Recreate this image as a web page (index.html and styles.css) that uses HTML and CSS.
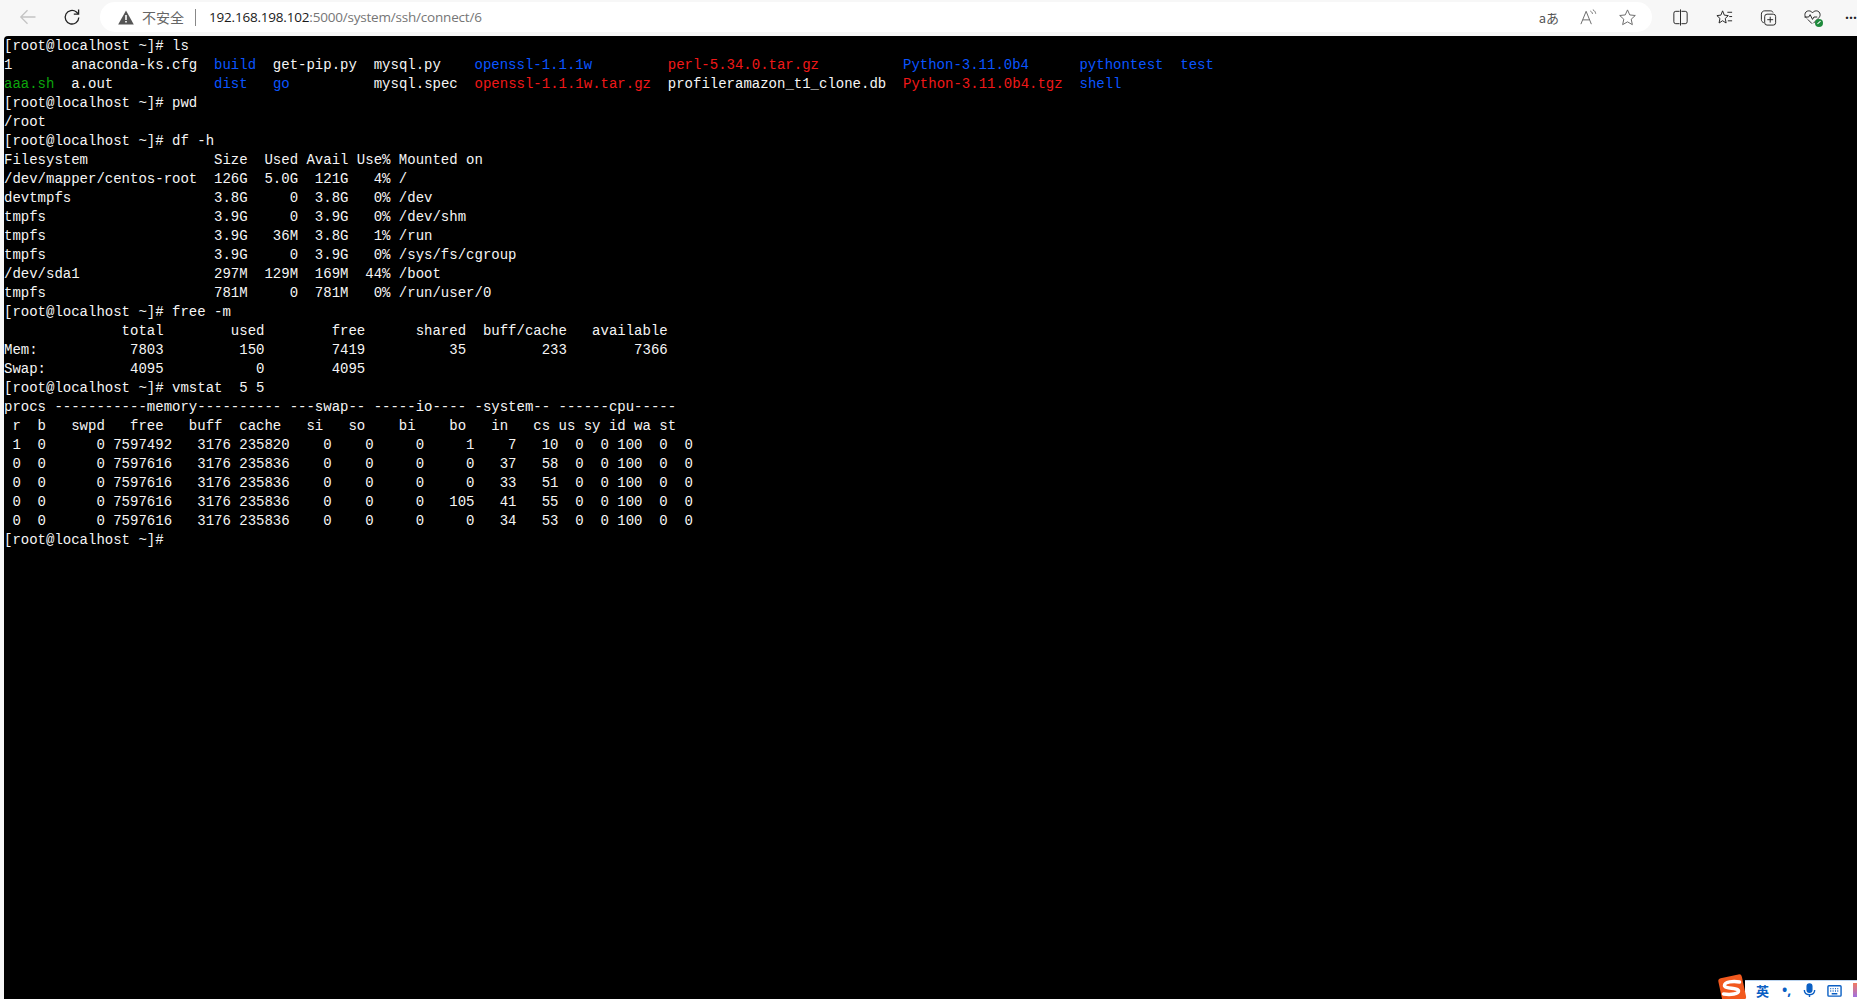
FILE: index.html
```html
<!DOCTYPE html>
<html lang="zh">
<head>
<meta charset="utf-8">
<title>SSH</title>
<link rel="stylesheet" href="styles.css">
</head>
<body>
<header class="toolbar">
  <div class="nav">
    <svg class="nav-icon back" viewBox="0 0 20 20"><path d="M17.5 10H2.800M9.500 3.200 2.800 10l6.700 6.800"/></svg>
    <svg class="nav-icon reload" viewBox="0 0 20 20"><path d="M16.800 10.500A6.800 6.800 0 1 1 14.400 5L16.400 7"/><path d="M16.600 2.400V7.200H11.800"/></svg>
  </div>
  <div class="omnibox">
    <svg class="warn" viewBox="0 0 16 15"><path d="M8 .5 15.800 14.500H.2Z"/><path class="warn-mark" d="M7.200 5h1.600v5H7.200ZM7.200 11h1.600v1.600H7.200Z"/></svg>
    <span class="insecure">不安全</span>
    <span class="divider"></span>
    <span class="url"><span class="host">192.168.198.102</span>:5000/system/ssh/connect/6</span>
    <span class="omni-actions">
      <span class="translate">aあ</span>
      <svg class="ti" viewBox="0 0 20 20"><path d="M2 17 7.500 3.500 13 17M4 12.500h7"/><path d="M12 3.200c1.400.8 2 1.800 2.200 3M14.600 1.800c1.800 1 2.700 2.500 3 4.200"/></svg>
      <svg class="ti star" viewBox="0 0 20 20"><path d="M10 2l2.400 5.300 5.800.6-4.300 3.900 1.200 5.700L10 14.600l-5.100 2.900 1.200-5.700-4.300-3.900 5.800-.6Z"/></svg>
    </span>
  </div>
  <div class="tools">
    <svg class="ti dark" viewBox="0 0 20 20"><path d="M9 3.500H5A2 2 0 0 0 3 5.500v9a2 2 0 0 0 2 2h4M11 3.500h4a2 2 0 0 1 2 2v9a2 2 0 0 1-2 2h-4M10 1.500v17"/></svg>
    <svg class="ti dark" viewBox="0 0 20 20"><path d="M8 3 9.800 7.500 14 8l-3.200 3 .9 4.800L8 13.400l-3.700 2.400.9-4.800L2 8l4.200-.5ZM13 4.500h5M15 9h3M13.500 13.500H18"/></svg>
    <svg class="ti dark" viewBox="0 0 20 20"><path d="M5 15.500C3.500 15 2.500 13.800 2.500 12V6.500c0-2 1.500-3.500 3.500-3.500h6c1.300 0 2.300.6 2.800 1.700"/><rect x="6" y="6.500" width="11.500" height="11.500" rx="2.500"/><path d="M11.800 9.200v6.200M8.700 12.300h6.200"/></svg>
    <span class="health">
      <svg class="ti dark" viewBox="0 0 20 20"><path d="M4 11C2.500 9.500 2 8.500 2 7c0-2.500 2-4 4-4 1.700 0 3 .8 4 2 1-1.200 2.300-2 4-2 2 0 4 1.500 4 4 0 1.500-.5 2.500-2 4l-5 5"/><path d="M1.500 9.500h4.500l1.500-2.500 2.500 5 1.500-2.500H15"/><path d="M5 12l4.500 4.500"/></svg>
      <span class="health-dot"></span>
    </span>
    <span class="more">···</span>
  </div>
</header>
<main class="terminal">
<pre class="screen">[root@localhost ~]# ls
1       anaconda-ks.cfg  <b class="dir">build</b>  get-pip.py  mysql.py    <b class="dir">openssl-1.1.1w</b>         <b class="arc">perl-5.34.0.tar.gz</b>          <b class="dir">Python-3.11.0b4</b>      <b class="dir">pythontest</b>  <b class="dir">test</b>
<b class="exe">aaa.sh</b>  a.out            <b class="dir">dist</b>   <b class="dir">go</b>          mysql.spec  <b class="arc">openssl-1.1.1w.tar.gz</b>  profileramazon_t1_clone.db  <b class="arc">Python-3.11.0b4.tgz</b>  <b class="dir">shell</b>
[root@localhost ~]# pwd
/root
[root@localhost ~]# df -h
Filesystem               Size  Used Avail Use% Mounted on
/dev/mapper/centos-root  126G  5.0G  121G   4% /
devtmpfs                 3.8G     0  3.8G   0% /dev
tmpfs                    3.9G     0  3.9G   0% /dev/shm
tmpfs                    3.9G   36M  3.8G   1% /run
tmpfs                    3.9G     0  3.9G   0% /sys/fs/cgroup
/dev/sda1                297M  129M  169M  44% /boot
tmpfs                    781M     0  781M   0% /run/user/0
[root@localhost ~]# free -m
              total        used        free      shared  buff/cache   available
Mem:           7803         150        7419          35         233        7366
Swap:          4095           0        4095
[root@localhost ~]# vmstat  5 5
procs -----------memory---------- ---swap-- -----io---- -system-- ------cpu-----
 r  b   swpd   free   buff  cache   si   so    bi    bo   in   cs us sy id wa st
 1  0      0 7597492   3176 235820    0    0     0     1    7   10  0  0 100  0  0
 0  0      0 7597616   3176 235836    0    0     0     0   37   58  0  0 100  0  0
 0  0      0 7597616   3176 235836    0    0     0     0   33   51  0  0 100  0  0
 0  0      0 7597616   3176 235836    0    0     0   105   41   55  0  0 100  0  0
 0  0      0 7597616   3176 235836    0    0     0     0   34   53  0  0 100  0  0
[root@localhost ~]#</pre>
</main>
<aside class="ime">
  <svg class="ime-logo" viewBox="0 0 28 26"><rect x="2" y="2" width="24" height="26" rx="3" transform="rotate(-12 14 14)" class="logo-bg"/><path class="logo-s" d="M21.500 8C15 6.500 6.500 8 6.500 11.500c0 3.500 14 2 14 5.500 0 3-7.500 4-15 3"/></svg>
  <span class="ime-bar">
    <span class="ime-lang">英</span>
    <span class="ime-punct">•,</span>
    <svg class="ime-icon" viewBox="0 0 16 16"><rect x="5.500" y="1" width="5" height="9" rx="2.500" class="fill"/><path d="M2.500 7.500c0 3.300 2.300 5 5.500 5s5.500-1.700 5.500-5M8 12.500V15"/></svg>
    <svg class="ime-icon ime-keys" viewBox="0 0 16 16"><rect x="1" y="3" width="14" height="11" rx="1"/><path d="M3.500 6h1M6 6h1M8.500 6h1M11 6h1M3.500 8.500h1M6 8.500h1M8.500 8.500h1M11 8.500h1M5 11.500h6"/></svg>
    <span class="ime-skin"></span>
  </span>
</aside>
</body>
</html>
```
FILE: styles.css
```css
* { box-sizing: border-box; }
html, body { height: 100%; }
body {
  margin: 0;
  display: flex;
  flex-direction: column;
  height: 999px;
  overflow: hidden;
  background: #f7f7f7;
  font-family: "Open Sans", "Noto Sans CJK SC", sans-serif;
}
.toolbar {
  display: flex;
  align-items: center;
  height: 36px;
  padding-bottom: 2px;
  flex: none;
  background: #f7f7f7;
}
.nav {
  display: flex;
  align-items: center;
  width: 100px;
  flex: none;
  padding-left: 18px;
  gap: 24px;
}
.nav-icon {
  width: 20px;
  height: 20px;
  fill: none;
  stroke: #222;
  stroke-width: 1.300;
}
.nav-icon.back { stroke: #c4c4c4; }
.omnibox {
  display: flex;
  align-items: center;
  flex: 1 1 auto;
  height: 30px;
  padding-left: 18px;
  background: #fff;
  border-radius: 15px;
}
.warn { width: 16px; height: 15px; flex: none; fill: #555; }
.warn-mark { fill: #fff; }
.insecure {
  margin-left: 8px;
  font-size: 14px;
  color: #666;
  font-family: "Noto Sans CJK SC", sans-serif;
}
.divider {
  width: 1px;
  height: 17px;
  margin: 0 13px 0 11px;
  background: #888;
}
.url { font-size: 13.500px; letter-spacing: -0.200px; color: #767676; white-space: nowrap; }
.host { color: #1a1a1a; }
.omni-actions {
  display: flex;
  align-items: center;
  gap: 20px;
  margin-left: auto;
  padding-right: 15px;
}
.translate { font-size: 13px; color: #555; font-family: "Noto Sans CJK SC", sans-serif; }
.ti {
  width: 19px;
  height: 19px;
  flex: none;
  fill: none;
  stroke: #666;
  stroke-width: 1;
}
.ti.dark { stroke: #222; }
.tools {
  display: flex;
  align-items: center;
  gap: 25px;
  width: 205px;
  flex: none;
  padding-left: 19px;
  overflow: hidden;
}
.health { position: relative; display: flex; }
.health-dot {
  position: absolute;
  right: -1px;
  bottom: 0;
  width: 8px;
  height: 8px;
  border-radius: 50%;
  background: #1e8a3c;
}
.health-dot::after {
  content: "";
  position: absolute;
  left: 2px;
  top: 3.500px;
  width: 4px;
  height: 1px;
  background: #fff;
  transform: rotate(-40deg);
}
.more { font-size: 14px; font-weight: 700; color: #222; margin-left: -2px; }
.terminal {
  flex: 1;
  margin-left: 4px;
  padding-top: 1px;
  background: #000;
  border-top-left-radius: 4px;
  overflow: hidden;
}
.screen {
  margin: 0;
  font-family: "Liberation Mono", "Courier New", monospace;
  font-size: 14px;
  line-height: 19px;
  color: #f5f5f5;
}
.screen b { font-weight: 400; }
.dir { color: #0a55ff; }
.arc { color: #f01818; }
.exe { color: #0ca50c; }
.ime {
  position: absolute;
  right: 0;
  bottom: 0;
  display: flex;
  justify-content: flex-end;
  align-items: flex-end;
  width: 139px;
  height: 25px;
}
.ime-logo {
  position: absolute;
  left: 0;
  top: 0;
  width: 28px;
  height: 26px;
  overflow: visible;
  z-index: 1;
}
.logo-bg { fill: #f2591e; }
.logo-s { fill: none; stroke: #fff; stroke-width: 3.500; stroke-linecap: round; }
.ime-bar {
  display: flex;
  align-items: center;
  gap: 11px;
  width: 112px;
  height: 19px;
  padding-left: 11px;
  background: #fff;
  border-top: 1px solid #bcd4ee;
  overflow: hidden;
}
.ime-lang { font-size: 13px; font-weight: 700; color: #0a5fc4; font-family: "Noto Sans CJK SC", sans-serif; line-height: 1; }
.ime-punct { margin-left: 2px; font-size: 14px; font-weight: 700; color: #0a5fc4; line-height: 1; }
.ime-icon { width: 15px; height: 15px; flex: none; fill: none; stroke: #0a5fc4; stroke-width: 1.500; }
.ime-icon .fill { fill: #0a5fc4; }
.ime-keys { margin-left: -1px; }
.ime-skin { width: 6px; height: 14px; flex: none; background: linear-gradient(#f07a60, #a070e0); }
```
